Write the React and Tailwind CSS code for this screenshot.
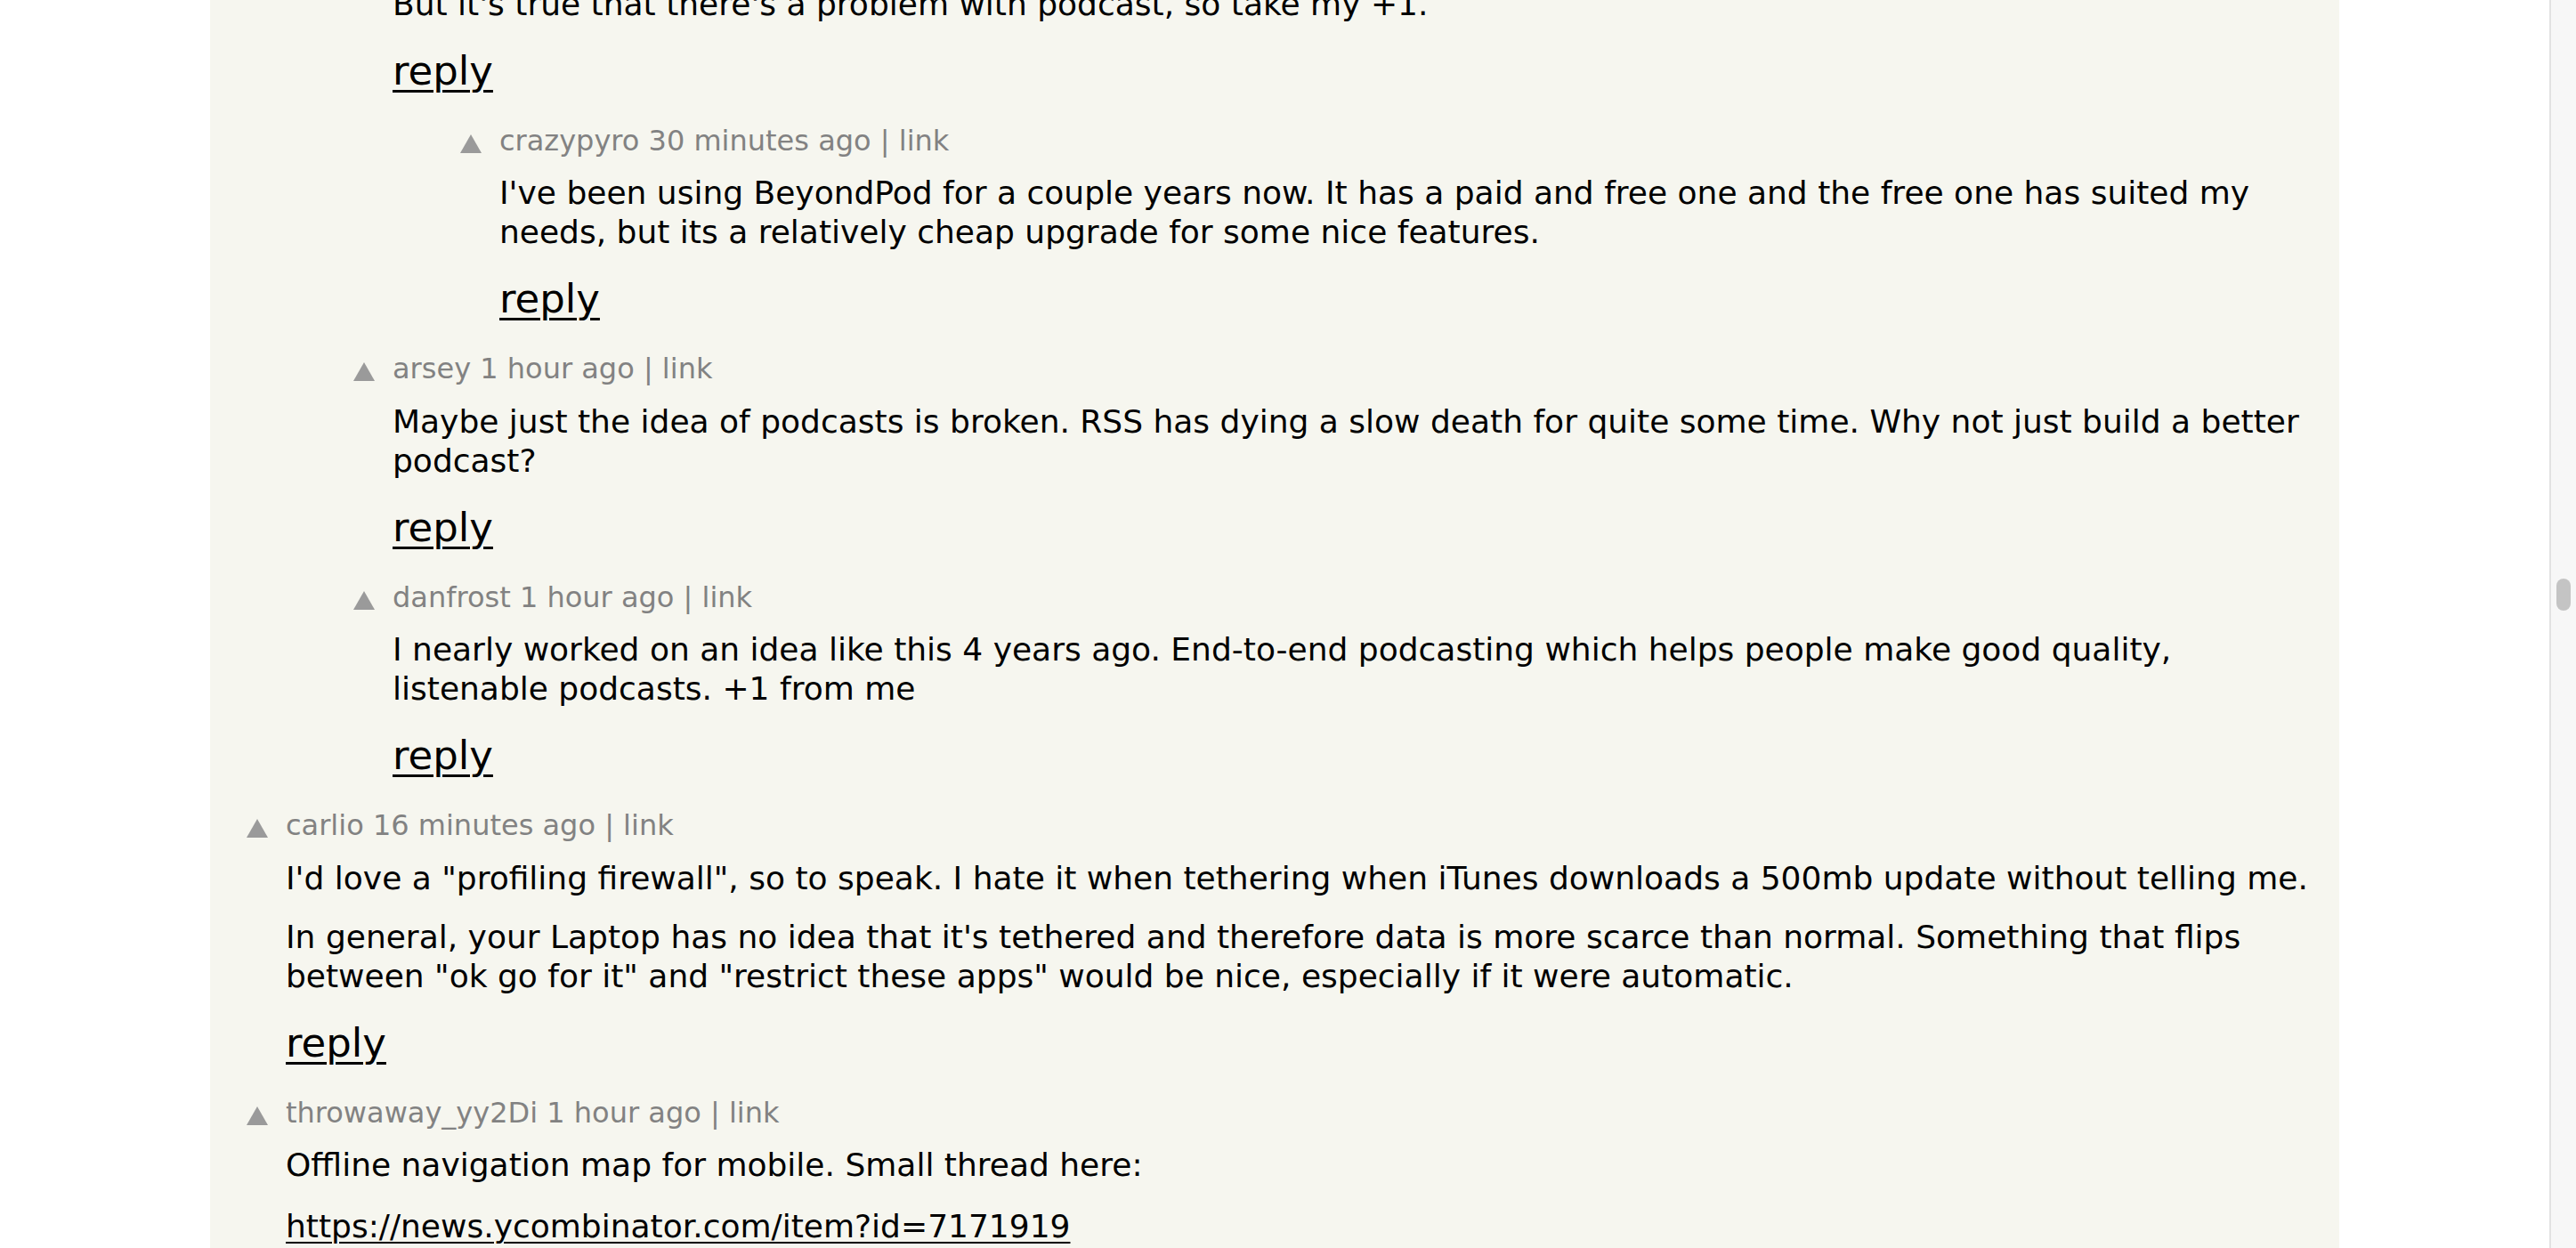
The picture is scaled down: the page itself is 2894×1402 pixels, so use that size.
import React from "react";

const INDENT = {
  0: "pl-0",
  1: "pl-[120px]",
  2: "pl-[240px]",
};

function Arrow() {
  return (
    <svg viewBox="0 0 24 21" className="ml-[41px] mt-[13px] h-[21px] w-[24px] shrink-0">
      <polygon points="12,0 24,21 0,21" fill="#9a9a9a" />
    </svg>
  );
}

function Reply() {
  return (
    <div className="mt-[26px] text-[45px] leading-[54px] text-black">
      <span className="underline decoration-[3px] underline-offset-[6px]">reply</span>
    </div>
  );
}

function Para({ lines, first, gap }) {
  return (
    <div className={first ? "mt-[17.5px]" : gap || "mt-[22px]"}>
      {lines.map((l, i) => (
        <div key={i} className="whitespace-nowrap text-[36px] leading-[44px] text-black">
          {l}
        </div>
      ))}
    </div>
  );
}

function Comment({ depth, user, time, paras, reply = true, gap }) {
  return (
    <div className={"mt-[31px] flex " + INDENT[depth]}>
      <div className="w-[85px] shrink-0">
        <Arrow />
      </div>
      <div className="flex flex-col">
        <div className="whitespace-nowrap text-[32px] leading-[40px] text-[#828282]">
          {user} {time} | link
        </div>
        {paras.map((p, i) => (
          <Para key={i} lines={p} first={i === 0} gap={gap} />
        ))}
        {reply && <Reply />}
      </div>
    </div>
  );
}

export default function App() {
  return (
    <div
      className="flex h-[1402px] w-full overflow-hidden bg-white"
      style={{ fontFamily: '"DejaVu Sans", Verdana, sans-serif' }}
    >
      <div className="flex-1">
        <div className="mx-auto h-[1402px] w-[2392px] bg-[#f6f6ef]">
          <div className="flex pl-[120px]">
            <div className="w-[85px] shrink-0" />
            <div className="-mt-[17.5px] flex flex-col">
              <div className="whitespace-nowrap text-[36px] leading-[44px] text-black">
                But it's true that there's a problem with podcast, so take my +1.
              </div>
              <Reply />
            </div>
          </div>

          <Comment
            depth={2}
            user="crazypyro"
            time="30 minutes ago"
            paras={[
              [
                "I've been using BeyondPod for a couple years now. It has a paid and free one and the free one has suited my",
                "needs, but its a relatively cheap upgrade for some nice features.",
              ],
            ]}
          />
          <Comment
            depth={1}
            user="arsey"
            time="1 hour ago"
            paras={[
              [
                "Maybe just the idea of podcasts is broken. RSS has dying a slow death for quite some time. Why not just build a better",
                "podcast?",
              ],
            ]}
          />
          <Comment
            depth={1}
            user="danfrost"
            time="1 hour ago"
            paras={[
              [
                "I nearly worked on an idea like this 4 years ago. End-to-end podcasting which helps people make good quality,",
                "listenable podcasts. +1 from me",
              ],
            ]}
          />
          <Comment
            depth={0}
            user="carlio"
            time="16 minutes ago"
            paras={[
              [
                "I'd love a \"profiling firewall\", so to speak. I hate it when tethering when iTunes downloads a 500mb update without telling me.",
              ],
              [
                "In general, your Laptop has no idea that it's tethered and therefore data is more scarce than normal. Something that flips",
                "between \"ok go for it\" and \"restrict these apps\" would be nice, especially if it were automatic.",
              ],
            ]}
          />
          <Comment
            depth={0}
            user="throwaway_yy2Di"
            time="1 hour ago"
            reply={false}
            gap="mt-[25px]"
            paras={[
              ["Offline navigation map for mobile. Small thread here:"],
              [
                <span className="underline decoration-[2px] underline-offset-[5px]">
                  https://news.ycombinator.com/item?id=7171919
                </span>,
              ],
            ]}
          />
        </div>
      </div>
      <div className="relative h-[1402px] w-[30px] shrink-0 border-l-2 border-[#e2e2e2] bg-[#f7f7f7]">
        <div className="absolute left-[6px] top-[650px] h-[36px] w-[16px] rounded-full bg-[#c4c4c4]" />
      </div>
    </div>
  );
}
